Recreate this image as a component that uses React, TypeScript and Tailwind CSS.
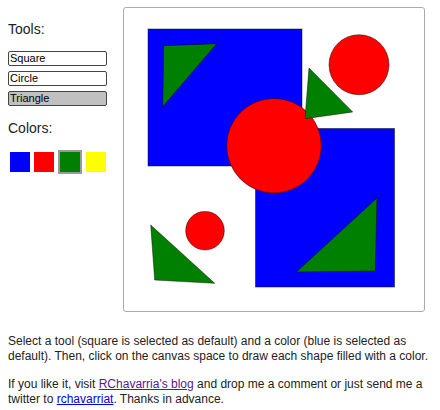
import { useState } from 'react';

const tools = ['Square', 'Circle', 'Triangle'];
const colors = ['#0000ff', '#ff0000', '#008000', '#ffff00'];

function ToolButton({ label, active, onClick }: { label: string; active: boolean; onClick: () => void }) {
  return (
    <button
      onClick={onClick}
      className={
        'block w-[99px] h-[15px] border border-[#444] rounded-[2px] pl-px text-left text-[11px] leading-[13px] text-black ' +
        (active ? 'bg-[#c0c0c0]' : 'bg-white')
      }
    >
      {label}
    </button>
  );
}

function Drawing() {
  const stroke = 'rgba(0,0,0,0.45)';
  return (
    <svg width="300" height="303" viewBox="124 8 300 303">
      <rect x="148" y="29" width="154" height="137" fill="#0000ff" stroke={stroke} />
      <polygon points="163.7,45.7 216.7,43.7 162.7,106.7" fill="#008000" stroke={stroke} />
      <rect x="255.5" y="128.5" width="139" height="158.5" fill="#0000ff" stroke={stroke} />
      <circle cx="274" cy="145.7" r="47.3" fill="#ff0000" stroke={stroke} />
      <circle cx="359" cy="64.7" r="30" fill="#ff0000" stroke={stroke} />
      <polygon points="309,68 352.7,112 305,118.7" fill="#008000" stroke={stroke} />
      <circle cx="205" cy="230.7" r="19.3" fill="#ff0000" stroke={stroke} />
      <polygon points="150.7,225 214.7,283.3 154.7,280" fill="#008000" stroke={stroke} />
      <polygon points="377,198 375.3,271 296.3,272" fill="#008000" stroke={stroke} />
    </svg>
  );
}

export default function App() {
  const [tool, setTool] = useState('Triangle');
  const [color, setColor] = useState(2);

  return (
    <div className="w-[440px] h-[410px] bg-white pl-2 text-[#222] font-['Liberation_Sans',Arial,sans-serif] overflow-hidden">
      <div className="flex">
        <div className="w-[115px]">
          <div className="mt-[21px] text-[14px] leading-4">Tools:</div>
          <div className="mt-[14px] flex flex-col gap-[5px]">
            {tools.map((t) => (
              <ToolButton key={t} label={t} active={tool === t} onClick={() => setTool(t)} />
            ))}
          </div>
          <div className="mt-[14px] text-[14px] leading-4">Colors:</div>
          <div className="mt-[14px] ml-[2px] flex items-center gap-1 h-6">
            {colors.map((c, i) => (
              <div
                key={c}
                onClick={() => setColor(i)}
                className={
                  'cursor-pointer ' +
                  (color === i ? 'w-6 h-6 border-2 border-[#999]' : 'w-5 h-5')
                }
                style={{ backgroundColor: c }}
              />
            ))}
          </div>
        </div>
        <div className="mt-[7px] w-[302px] h-[305px] border border-[#aaa] rounded-[3px] bg-white overflow-hidden">
          <Drawing />
        </div>
      </div>
      <p className="mt-[22px] w-[432px] text-[12px] leading-[15px]">
        Select a tool (square is selected as default) and a color (blue is selected as default). Then, click on the canvas space to draw each shape filled with a color.
      </p>
      <p className="mt-[13px] w-[432px] text-[12px] leading-[15px]">
        If you like it, visit{' '}
        <a href="#" className="underline text-[#551a8b]">
          RChavarria's blog
        </a>{' '}
        and drop me a comment or just send me a twitter to{' '}
        <a href="#" className="underline text-[#0000ee]">
          rchavarriat
        </a>
        . Thanks in advance.
      </p>
    </div>
  );
}
